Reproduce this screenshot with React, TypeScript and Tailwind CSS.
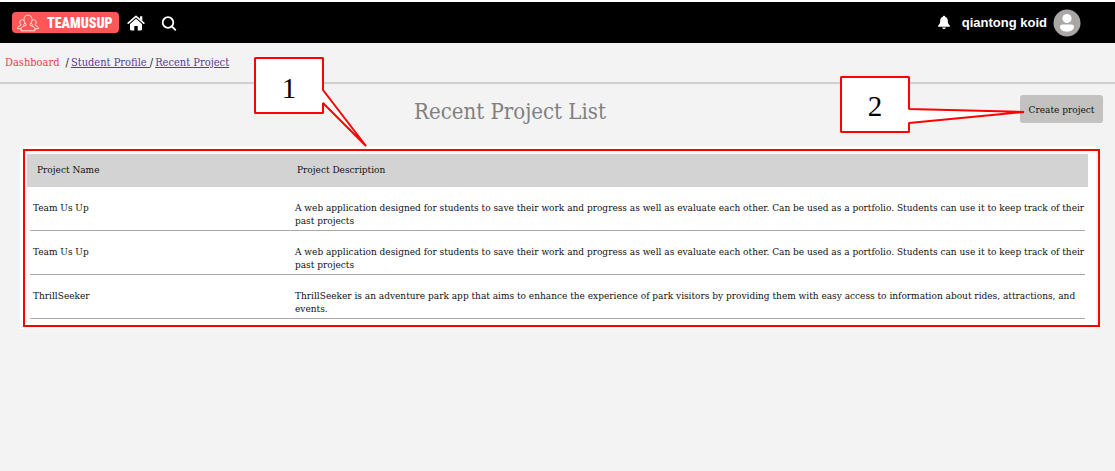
import React from "react";

const projects = [
  {
    name: "Team Us Up",
    description:
      "A web application designed for students to save their work and progress as well as evaluate each other. Can be used as a portfolio. Students can use it to keep track of their past projects",
  },
  {
    name: "Team Us Up",
    description:
      "A web application designed for students to save their work and progress as well as evaluate each other. Can be used as a portfolio. Students can use it to keep track of their past projects",
  },
  {
    name: "ThrillSeeker",
    description:
      "ThrillSeeker is an adventure park app that aims to enhance the experience of park visitors by providing them with easy access to information about rides, attractions, and events.",
  },
];

function TeamIcon() {
  return (
    <svg viewBox="0 0 22 18" className="h-[18px] w-[22px] shrink-0" fill="none" stroke="#ffe3e1" strokeWidth="1" strokeLinejoin="round">
      <path d="M9 10.200C7.600 8.800 7 7 7 5.200C7 2.800 8.600 1.200 11 1.200s4 1.600 4 4c0 1.800-.6 3.600-2 5v1l3.600 1.400c1 .4 1.400 1.400 1.400 4.200H4c0-2.800.4-3.800 1.400-4.200L9 11.200z" />
      <path d="M7.200 7C6.800 6.200 6.100 5.800 5.200 5.800c-1.500 0-2.400 1-2.400 2.400 0 .9.300 1.700 1 2.300v.9l-2 .8c-.8.3-1.100 1.200-1.200 2.600h3.600M7.800 9c-.3.700-.6 1.100-1.100 1.500v.9" />
      <path d="M14.800 7c.4-.8 1.100-1.200 2-1.200 1.500 0 2.400 1 2.400 2.400 0 .9-.3 1.700-1 2.300v.9l2 .8c.8.300 1.100 1.200 1.200 2.600h-3.600M14.200 9c.3.700.6 1.100 1.100 1.500v.9" />
    </svg>
  );
}

function HomeIcon() {
  return (
    <svg viewBox="0 0 18 16" className="h-4 w-[18px]" fill="#fff">
      <path d="M1.200 8.100 9 1.300l7.800 6.800" fill="none" stroke="#fff" strokeWidth="1.700" strokeLinecap="round" strokeLinejoin="round" />
      <path d="M13 1.200h2.300v4.500L13 3.700z" />
      <path d="m9 3.700 6 5.200v5.300c0 .7-.5 1.200-1.200 1.200h-3.100v-4.500H7.300v4.500H4.200c-.7 0-1.200-.5-1.200-1.200V8.900z" />
    </svg>
  );
}

function SearchIcon() {
  return (
    <svg viewBox="0 0 16 16" className="h-4 w-4" fill="none" stroke="#fff" strokeWidth="1.800" strokeLinecap="round">
      <circle cx="7" cy="7.500" r="5.300" />
      <path d="m11 11.500 3.300 3.300" />
    </svg>
  );
}

function BellIcon() {
  return (
    <svg viewBox="0 0 14 16" className="h-4 w-[14px]" fill="#fff">
      <path d="M7 .7c.7 0 1.100.4 1.100 1.100 1.700.5 2.700 1.900 2.700 3.800 0 2.700.5 3.700 2 4.900.5.5.1 1.300-.6 1.300H1.800c-.7 0-1.100-.8-.6-1.300 1.500-1.200 2-2.200 2-4.900 0-1.900 1-3.300 2.700-3.800C5.900 1.100 6.300.7 7 .7z" />
      <path d="M5.200 12.600h3.600c-.2 1-.9 1.500-1.800 1.500s-1.600-.5-1.800-1.500z" />
    </svg>
  );
}

function Avatar() {
  return (
    <svg viewBox="0 0 28 28" className="size-7">
      <circle cx="14" cy="14" r="13.500" fill="#aaa6a6" />
      <circle cx="14" cy="9.500" r="4.600" fill="#fff" />
      <path d="M9.500 15.600h9c1.500 0 2.500 1 2.500 2.200 0 3-3 4.900-7 4.900s-7-1.900-7-4.900c0-1.200 1-2.200 2.500-2.200z" fill="#fff" />
    </svg>
  );
}

export default function App() {
  return (
    <div className="min-h-screen bg-[#f3f3f3] font-['DejaVu_Serif_Condensed','Liberation_Serif',serif] text-[10px] leading-[13px] text-[#111]">
      <header className="flex h-[43px] items-center border-t-2 border-white bg-black pl-3 pr-[34px]">
        <a href="#top" className="flex h-[21px] w-[107px] items-center gap-2 rounded bg-[#ff5757] pl-[5px]">
          <TeamIcon />
          <span className="font-['Roboto_Condensed','Open_Sans_Condensed',Roboto,sans-serif] text-[14px] leading-5 font-black text-white">
            TEAMUSUP
          </span>
        </a>
        <a href="#home" aria-label="Home" className="ml-2">
          <HomeIcon />
        </a>
        <button type="button" aria-label="Search" className="ml-4">
          <SearchIcon />
        </button>
        <div className="ml-auto flex items-center">
          <button type="button" aria-label="Notifications">
            <BellIcon />
          </button>
          <span className="mr-1.5 ml-[11px] font-['Liberation_Sans',sans-serif] text-[13px] leading-4 font-bold text-white">
            qiantong koid
          </span>
          <Avatar />
        </div>
      </header>

      <nav aria-label="Breadcrumb" className="relative flex h-[41px] items-center border-b-2 border-[#cfcfcf] pl-[5px] text-[11px]">
        <a href="#dashboard" className="mr-1.5 text-[#e83e50]">Dashboard</a>
        <span className="mr-0.5">/</span>
        <a href="#profile" className="whitespace-pre text-[#5b3a94] underline">{"Student Profile "}</a>
        <span className="mr-0.5">/</span>
        <a href="#projects" className="text-[#5b3a94] underline">Recent Project</a>

        <div className="absolute top-3.5 left-[254px] z-10 h-[90px] w-[113px]">
          <svg viewBox="0 0 113 90" className="absolute inset-0 size-full" fill="#fff" stroke="#f00" strokeWidth="2">
            <path d="M1 1H69V33L112 89L69 46V56H1Z" strokeLinejoin="bevel" />
          </svg>
          <span className="relative flex h-[62px] w-[70px] items-center justify-center font-['Liberation_Serif',serif] text-[29px] text-black">
            1
          </span>
        </div>
      </nav>

      <main>
        <div className="flex h-[62px] items-start pt-[11px] pr-3">
          <h1 className="grow text-center text-[22px] leading-[34px] font-normal text-[#808080]">Recent Project List</h1>
          <div className="relative">
            <button type="button" className="h-7 w-[83px] rounded-[3px] bg-[#c4c1c1] text-[10px] whitespace-nowrap">
              Create project
            </button>
            <div className="absolute top-[-19px] left-[-180px] h-[57px] w-[186px]">
              <svg viewBox="0 0 186 57" className="absolute inset-0 size-full" fill="#fff" stroke="#f00" strokeWidth="2">
                <path d="M1 1H69V33L184 36L69 47V56H1Z" strokeLinejoin="bevel" />
              </svg>
              <span className="relative flex h-[61px] w-[70px] items-center justify-center font-['Liberation_Serif',serif] text-[29px] text-black">
                2
              </span>
            </div>
          </div>
        </div>

        <section className="relative mr-[19px] ml-5 bg-white pt-2 pr-[11px] pb-2.5 pl-2.5">
          <div className="pointer-events-none absolute top-[3px] right-[-4px] bottom-0.5 left-[3px] border-2 border-[#f00]" />
          <table className="w-full table-fixed border-separate border-spacing-0 text-left">
            <colgroup>
              <col className="w-[261px]" />
              <col />
            </colgroup>
            <thead>
              <tr className="h-[33px] bg-[#d3d3d3]">
                <th className="pb-0.5 pl-[7px] font-normal shadow-[-3px_0_0_#d3d3d3]">Project Name</th>
                <th className="pb-0.5 pl-[6px] font-normal shadow-[3px_0_0_#d3d3d3]">Project Description</th>
              </tr>
            </thead>
            <tbody>
              {projects.map((project, index) => (
                <tr key={index} className="align-top">
                  <td className="border-b border-[#aaa] pt-3.5 pb-[3px] pl-[3px]">{project.name}</td>
                  <td className="border-b border-[#aaa] pt-3.5 pb-[3px] pl-1">{project.description}</td>
                </tr>
              ))}
            </tbody>
          </table>
        </section>
      </main>
    </div>
  );
}
